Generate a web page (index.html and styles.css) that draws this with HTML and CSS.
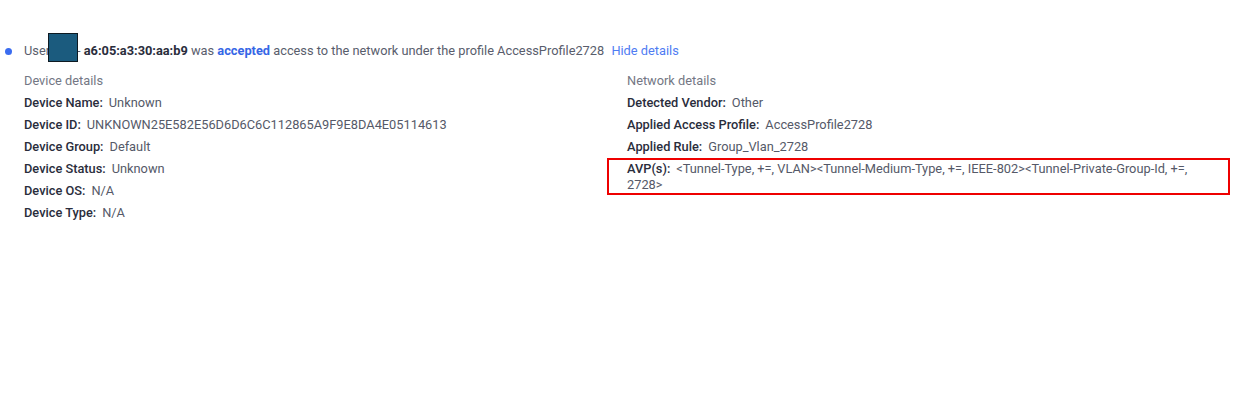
FILE: index.html
```html
<!DOCTYPE html>
<html>
<head>
<meta charset="utf-8">
<link rel="stylesheet" href="styles.css">
</head>
<body>
<div class="event">
  <div class="summary">
    <span class="dot"></span>
    <span class="text">User<span class="name"></span>- <b class="mac">a6:05:a3:30:aa:b9</b> was <b class="status">accepted</b> access to the network under the profile AccessProfile2728 <a class="toggle">Hide details</a><span class="mask"></span></span>
  </div>
  <div class="details">
    <div class="col">
      <div class="head">Device details</div>
      <div class="row"><span class="label">Device Name:</span><span class="value">Unknown</span></div>
      <div class="row"><span class="label">Device ID:</span><span class="value">UNKNOWN25E582E56D6D6C6C112865A9F9E8DA4E05114613</span></div>
      <div class="row"><span class="label">Device Group:</span><span class="value">Default</span></div>
      <div class="row"><span class="label">Device Status:</span><span class="value">Unknown</span></div>
      <div class="row"><span class="label">Device OS:</span><span class="value">N/A</span></div>
      <div class="row"><span class="label">Device Type:</span><span class="value">N/A</span></div>
    </div>
    <div class="col">
      <div class="head">Network details</div>
      <div class="row"><span class="label">Detected Vendor:</span><span class="value">Other</span></div>
      <div class="row"><span class="label">Applied Access Profile:</span><span class="value">AccessProfile2728</span></div>
      <div class="row"><span class="label">Applied Rule:</span><span class="value">Group_Vlan_2728</span></div>
      <div class="row highlight"><span class="label">AVP(s):</span><span class="value">&lt;Tunnel-Type, +=, VLAN&gt;&lt;Tunnel-Medium-Type, +=, IEEE-802&gt;&lt;Tunnel-Private-Group-Id, +=, 2728&gt;</span></div>
    </div>
  </div>
</div>
</body>
</html>
```
FILE: styles.css
```css
html, body {
  margin: 0;
  padding: 0;
  background: #ffffff;
}
body {
  font-family: Roboto, "Liberation Sans", sans-serif;
  font-size: 12.8px;
  color: #4e5262;
}
.event {
  padding: 43px 28px 0 5px;
}
.summary {
  display: flex;
  align-items: center;
  gap: 12px;
  line-height: 16px;
}
.dot {
  width: 7px;
  height: 7px;
  border-radius: 50%;
  background: #3a6cf0;
  flex: none;
}
.text {
  position: relative;
  color: #595d6c;
}
.name {
  display: inline-block;
  width: 27px;
}
.mask {
  position: absolute;
  left: 24px;
  top: -10px;
  width: 28px;
  height: 27px;
  background: #1b5b7e;
  border: 1px solid #0e1a22;
}
.mac {
  color: #2a2d3c;
  font-weight: 700;
}
.status {
  color: #3566e6;
  font-weight: 700;
}
.toggle {
  color: #4f7cf3;
  margin-left: 4px;
  cursor: pointer;
}
.details {
  display: grid;
  grid-template-columns: 1fr 1fr;
  padding-left: 19px;
  margin-top: 14px;
}
.head {
  color: #737784;
  line-height: 16px;
  margin-bottom: 6px;
}
.row {
  line-height: 16px;
  margin-bottom: 6px;
}
.label {
  color: #2a2d3c;
  font-weight: 500;
  margin-right: 6px;
}
.value {
  color: #555968;
}
.highlight {
  margin-top: -3px;
  margin-left: -20px;
  padding: 1px 18px 0 18px;
  border: 2px solid #ee0000;
}
```
